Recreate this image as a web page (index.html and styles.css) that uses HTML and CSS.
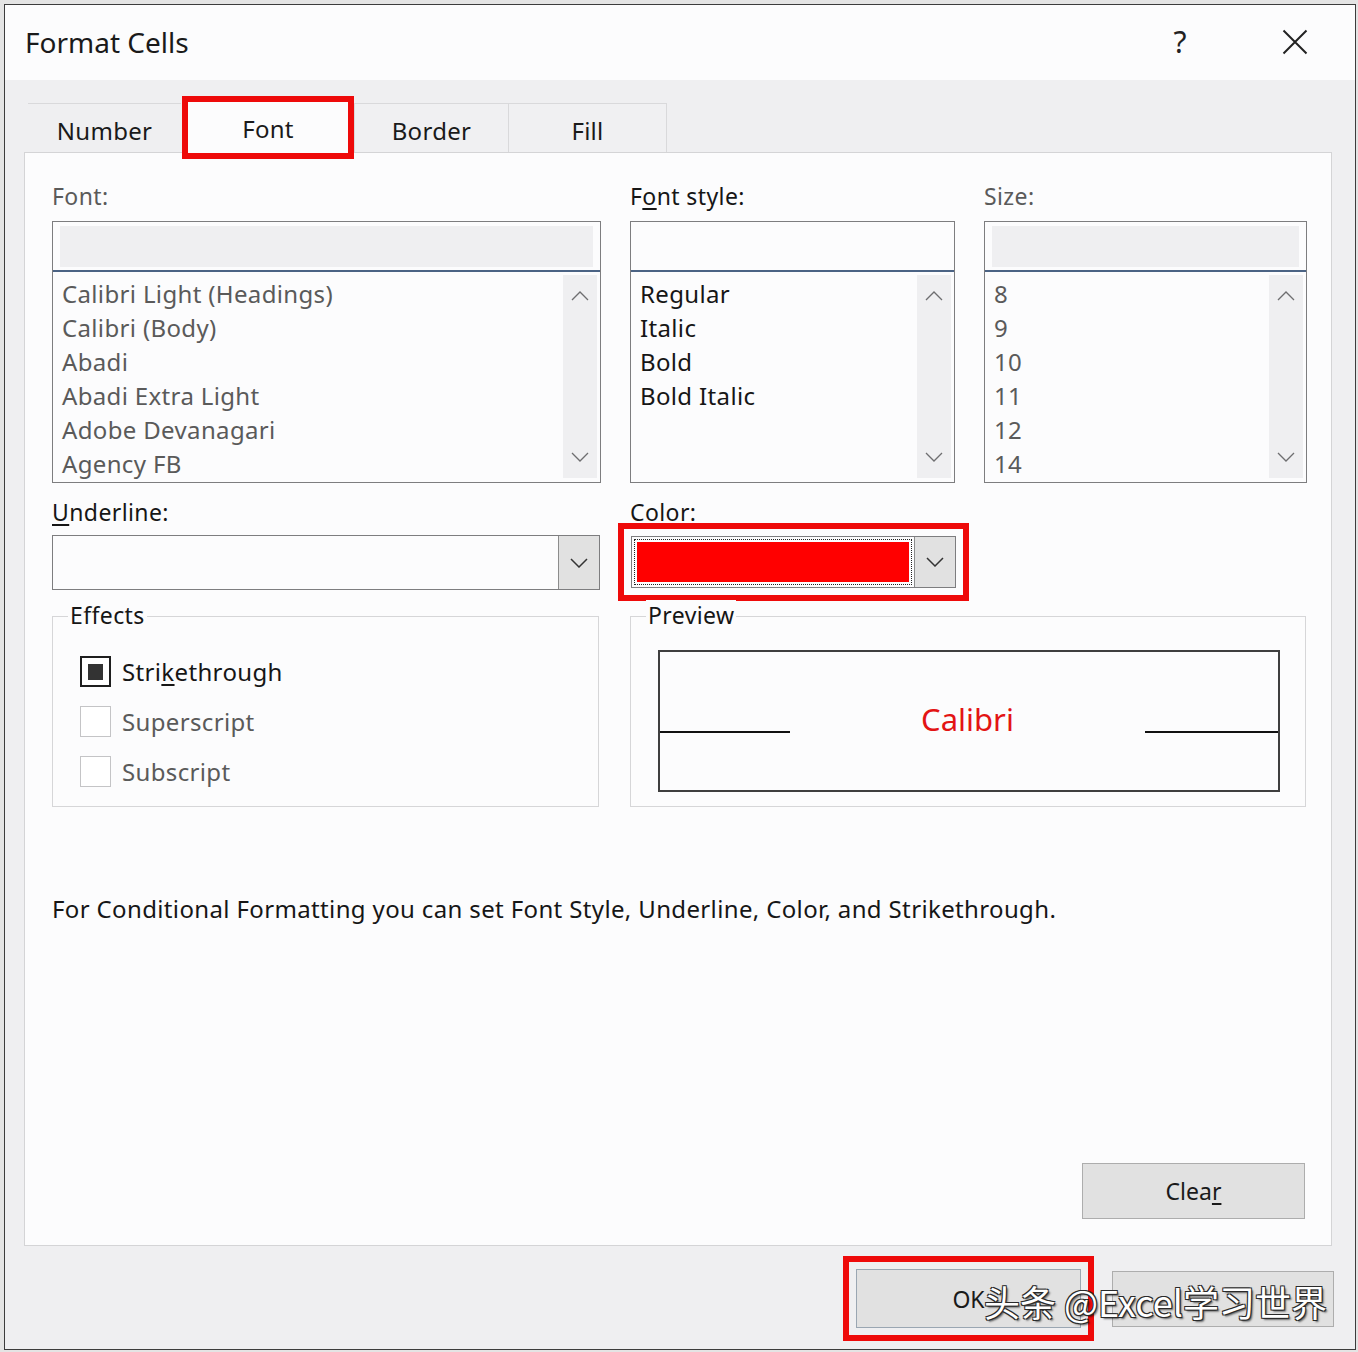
FILE: index.html
```html
<!DOCTYPE html>
<html>
<head>
<meta charset="utf-8">
<link rel="stylesheet" href="styles.css">
</head>
<body>
<div class="dialog">
  <div class="titlebar">
    <div class="title">Format Cells</div>
    <div class="help">?</div>
    <svg class="close" width="26" height="26" viewBox="0 0 26 26"><path d="M1.5 1.5L24.5 24.5M24.5 1.5L1.5 24.5"/></svg>
  </div>

  <div class="tabs">
    <div class="tab tab-number">Number</div>
    <div class="tab tab-font">Font</div>
    <div class="tab tab-border">Border</div>
    <div class="tab tab-fill">Fill</div>
  </div>

  <div class="panel">
    <div class="row row1">
      <div class="field">
        <div class="label dim">Font:</div>
        <div class="listbox">
          <div class="lb-input"><div class="lb-fill"></div></div>
          <div class="lb-list">
            <div class="items dim">
              <div>Calibri Light (Headings)</div>
              <div>Calibri (Body)</div>
              <div>Abadi</div>
              <div>Abadi Extra Light</div>
              <div>Adobe Devanagari</div>
              <div>Agency FB</div>
            </div>
            <div class="scroll">
              <svg class="chev" width="18" height="10" viewBox="0 0 18 10"><polyline points="1,9 9,1 17,9"/></svg>
              <svg class="chev" width="18" height="10" viewBox="0 0 18 10"><polyline points="1,1 9,9 17,1"/></svg>
            </div>
          </div>
        </div>
      </div>
      <div class="field">
        <div class="label">F<u>o</u>nt style:</div>
        <div class="listbox">
          <div class="lb-input white"><div class="lb-fill"></div></div>
          <div class="lb-list">
            <div class="items">
              <div>Regular</div>
              <div>Italic</div>
              <div>Bold</div>
              <div>Bold Italic</div>
            </div>
            <div class="scroll">
              <svg class="chev" width="18" height="10" viewBox="0 0 18 10"><polyline points="1,9 9,1 17,9"/></svg>
              <svg class="chev" width="18" height="10" viewBox="0 0 18 10"><polyline points="1,1 9,9 17,1"/></svg>
            </div>
          </div>
        </div>
      </div>
      <div class="field">
        <div class="label dim">Size:</div>
        <div class="listbox">
          <div class="lb-input"><div class="lb-fill"></div></div>
          <div class="lb-list">
            <div class="items dim">
              <div>8</div>
              <div>9</div>
              <div>10</div>
              <div>11</div>
              <div>12</div>
              <div>14</div>
            </div>
            <div class="scroll">
              <svg class="chev" width="18" height="10" viewBox="0 0 18 10"><polyline points="1,9 9,1 17,9"/></svg>
              <svg class="chev" width="18" height="10" viewBox="0 0 18 10"><polyline points="1,1 9,9 17,1"/></svg>
            </div>
          </div>
        </div>
      </div>
    </div>

    <div class="row row2">
      <div class="field">
        <div class="label"><u>U</u>nderline:</div>
        <div class="combo underline-combo">
          <div class="combo-value"></div>
          <div class="combo-btn">
            <svg class="chev dark" width="18" height="10" viewBox="0 0 18 10"><polyline points="1,1 9,9 17,1"/></svg>
          </div>
        </div>
      </div>
      <div class="field">
        <div class="label">Color:</div>
        <div class="combo color-combo">
          <div class="swatch-area">
            <div class="swatch-focus"><div class="swatch"></div></div>
          </div>
          <div class="combo-btn">
            <svg class="chev dark" width="18" height="10" viewBox="0 0 18 10"><polyline points="1,1 9,9 17,1"/></svg>
          </div>
        </div>
      </div>
    </div>

    <div class="row3">
      <div class="group effects">
        <div class="legend">Effects</div>
        <div class="check first">
          <span class="box checked"><span class="mark"></span></span>
          <span class="check-label">Stri<u>k</u>ethrough</span>
        </div>
        <div class="check">
          <span class="box"></span>
          <span class="check-label dim">Superscript</span>
        </div>
        <div class="check">
          <span class="box"></span>
          <span class="check-label dim">Subscript</span>
        </div>
      </div>
      <div class="group preview">
        <div class="legend">Preview</div>
        <div class="preview-box">
          <div class="pv-line left"></div>
          <div class="pv-text">Calibri</div>
          <div class="pv-line right"></div>
        </div>
      </div>
    </div>

    <div class="info">For Conditional Formatting you can set Font Style, Underline, Color, and Strikethrough.</div>

    <div class="btn clear-btn">Clea<u>r</u></div>
  </div>

  <div class="footer">
    <div class="btn ok-btn">OK</div>
    <div class="btn cancel-btn"></div>
  </div>

  <div class="watermark">头条 @Excel学习世界</div>
</div>
</body>
</html>
```

FILE: styles.css
```css
* { box-sizing: border-box; }
html, body { margin: 0; padding: 0; }
body {
  width: 1358px;
  height: 1352px;
  overflow: hidden;
  background: #e4e4e4;
  font-family: "Noto Sans", "Open Sans", sans-serif;
  color: #161616;
}
u { text-decoration-thickness: 1.5px; text-underline-offset: 3px; }

.dialog {
  position: relative;
  margin: 4px 0 0 4px;
  width: 1352px;
  height: 1346px;
  border: 1px solid #3c3c3c;
  background: #efeff1;
  display: flex;
  flex-direction: column;
}

/* title bar */
.titlebar {
  flex-shrink: 0;
  height: 75px;
  background: #fcfcfd;
  display: flex;
  align-items: center;
}
.title {
  flex: 1;
  margin-left: 20px;
  font-size: 28px;
  line-height: 40px;
  margin-bottom: 2px;
  color: #1a1a1a;
}
.help {
  width: 30px;
  text-align: center;
  font-size: 30px;
  line-height: 40px;
  color: #222;
  margin-right: 87px;
  margin-bottom: 2px;
}
.close {
  margin-right: 47px;
  margin-bottom: 2px;
  stroke: #222;
  stroke-width: 2;
  fill: none;
}

/* tabs */
.tabs {
  flex-shrink: 0;
  height: 72px;
  display: flex;
  align-items: flex-end;
  padding-left: 23px;
}
.tab {
  height: 49px;
  display: flex;
  align-items: center;
  justify-content: center;
  font-size: 24px;
  line-height: 30px;
  padding-top: 5px;
  letter-spacing: 0.3px;
  color: #1a1a1a;
  background: #f0f0f2;
  border-top: 1px solid #d9d9db;
}
.tab-number { width: 153px; background: #efeff1; }
.tab-font {
  position: relative;
  z-index: 1;
  width: 160px;
  height: 51px;
  margin: 0 6px -1px 7px;
  padding-top: 2px;
  background: #fcfcfd;
  border: none;
  outline: 6px solid #ee0a0a;
}
.tab-border { width: 155px; border-left: 1px solid #d9d9db; border-right: 1px solid #d9d9db; }
.tab-fill { width: 158px; border-right: 1px solid #d9d9db; }

/* panel */
.panel {
  flex-shrink: 0;
  height: 1094px;
  margin: 0 23px 0 19px;
  border: 1px solid #d4d4d6;
  background: #fcfcfd;
  padding: 0 24px 0 27px;
  display: flex;
  flex-direction: column;
}
.row {
  display: grid;
  grid-template-columns: 549px 325px 323px;
  column-gap: 29px;
  align-items: start;
}
.row1 { margin-top: 28px; }
.row2 { margin-top: 14px; }

.label {
  font-size: 23px;
  line-height: 30px;
  height: 30px;
  letter-spacing: 0.4px;
  white-space: nowrap;
}
.row1 .listbox { margin-top: 10px; }
.dim { color: #5a5a5a; }

.listbox {
  height: 262px;
  border: 1px solid #7d7d7f;
  background: #fcfcfd;
  display: flex;
  flex-direction: column;
}
.lb-input {
  height: 50px;
  flex-shrink: 0;
  padding: 4px 7px 3px;
  border-bottom: 2px solid #4b6384;
}
.lb-fill { height: 100%; background: #efeff1; }
.lb-input.white .lb-fill { background: transparent; }
.lb-list {
  flex: 1;
  display: flex;
  min-height: 0;
}
.items {
  flex: 1;
  padding: 5px 0 0 9px;
  font-size: 24px;
  line-height: 34px;
  letter-spacing: 0.35px;
  white-space: nowrap;
  overflow: hidden;
}
.scroll {
  width: 34px;
  margin: 3px 3px 4px 0;
  background: #efeff1;
  display: flex;
  flex-direction: column;
  justify-content: space-between;
  align-items: center;
  padding: 16px 0 16px;
}
.chev { fill: none; stroke: #6e6e70; stroke-width: 1.3; }
.chev.dark { stroke: #333; stroke-width: 1.5; }

/* combos */
.combo {
  display: flex;
  border: 1px solid #7d7d7f;
  background: #fcfcfd;
}
.underline-combo {
  margin-top: 8px;
  width: 548px;
  height: 55px;
}
.combo-value { flex: 1; }
.combo-btn {
  width: 41px;
  background: #e1e1e1;
  border-left: 1px solid #8c8c8c;
  display: flex;
  align-items: center;
  justify-content: center;
}
.color-combo {
  margin: 9px 0 0 1px;
  width: 325px;
  height: 52px;
  outline: 6px solid #ee0a0a;
  outline-offset: 7px;
}
.swatch-area { flex: 1; padding: 2px; }
.swatch-focus {
  height: 100%;
  border: 1px dotted #222;
  padding: 2px;
}
.swatch { height: 100%; background: #ff0000; }

/* groups */
.row3 {
  display: flex;
  margin-top: 26px;
}
.group {
  height: 191px;
  border: 1px solid #d6d6d8;
}
.effects { width: 547px; }
.preview { width: 676px; margin-left: 31px; }
.legend {
  width: max-content;
  margin: -17px 0 0 15px;
  padding: 0 2px;
  background: #fcfcfd;
  font-size: 23px;
  line-height: 30px;
  letter-spacing: 0.4px;
}
.check {
  display: flex;
  align-items: center;
  height: 31px;
  margin: 19px 0 0 27px;
}
.check.first { margin-top: 26px; }
.box {
  width: 31px;
  height: 31px;
  border: 1px solid #c4c4c6;
  background: #fff;
  margin-right: 11px;
  display: flex;
  align-items: center;
  justify-content: center;
}
.box.checked { border: 2px solid #1e1e1e; }
.mark { width: 15px; height: 16px; background: #333; }
.check-label { font-size: 24px; line-height: 30px; letter-spacing: 0.35px; }

.preview-box {
  margin: 20px 0 0 27px;
  width: 622px;
  height: 142px;
  border: 2px solid #3f3f3f;
  display: flex;
  align-items: flex-start;
}
.pv-line { height: 2px; background: #111; margin-top: 79px; }
.pv-line.left { width: 130px; }
.pv-line.right { width: 133px; }
.pv-text {
  flex: 1;
  text-align: center;
  font-size: 31px;
  line-height: 40px;
  margin-top: 47px;
  color: #e31414;
}

.info {
  margin-top: 87px;
  font-size: 24px;
  line-height: 30px;
  letter-spacing: 0.36px;
  white-space: nowrap;
}

/* buttons */
.btn {
  display: flex;
  align-items: center;
  justify-content: center;
  background: #e1e1e1;
  border: 1px solid #adadad;
  font-size: 23px;
  line-height: 30px;
  color: #1a1a1a;
}
.clear-btn {
  margin-top: auto;
  margin-bottom: 26px;
  margin-right: 2px;
  align-self: flex-end;
  width: 223px;
  height: 56px;
}

.footer {
  flex: 1;
  display: flex;
  justify-content: flex-end;
  align-items: center;
  gap: 31px;
  padding: 2px 21px 0 0;
}
.ok-btn {
  width: 225px;
  height: 59px;
  border-color: #9aa6b2;
  outline: 6px solid #ee0a0a;
  outline-offset: 7px;
}
.cancel-btn {
  width: 222px;
  height: 56px;
}

.watermark {
  position: absolute;
  left: 979px;
  top: 1274px;
  font-family: "Noto Sans CJK SC", "Noto Sans", sans-serif;
  font-size: 36px;
  line-height: 44px;
  color: #fff;
  white-space: nowrap;
  text-shadow: 1px 1px 0 #2a2a2a, -1px -1px 0 #2a2a2a, 1px -1px 0 #2a2a2a, -1px 1px 0 #2a2a2a, 2px 2px 2px rgba(0,0,0,0.6);
}
```
